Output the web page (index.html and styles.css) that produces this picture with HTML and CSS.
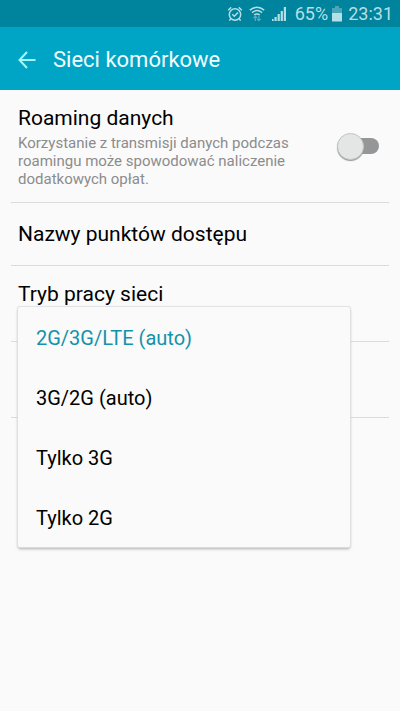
FILE: index.html
```
<!DOCTYPE html>
<html lang="pl">
<head>
	<meta charset="UTF-8">
	<meta name="viewport" content="width=device-width, initial-scale=1">
	<title>Sieci komórkowe</title>
	<link rel="stylesheet" href="styles.css">
</head>
<body>
	<div class="status-bar">
		<svg class="alarm" width="16" height="16" viewBox="0 0 16 16">
			<circle cx="8" cy="8.5" r="5.7"/>
			<path d="M1.2 4.2L4.2 1.4M14.8 4.2L11.8 1.4M3.8 12.8L2.4 14.6M12.2 12.8L13.6 14.6M5.3 8.3L7.3 10.2L11 6.4"/>
		</svg>
		<svg class="wifi" width="16" height="16" viewBox="0 0 16 16">
			<path d="M.8 4.2Q8 -1.6 15.2 4.2M3 6.6Q8 2.6 13 6.6M5.2 9Q8 6.8 10.8 9"/>
			<path class="arrows" d="M6.3 15V10.4M4.6 12L6.3 10.2L8 12M9.9 9.8V14.4M8.2 12.9L9.9 14.7L11.6 12.9"/>
		</svg>
		<svg class="signal" width="16" height="16" viewBox="0 0 16 16">
			<path d="M1 13h1.600v2H1zM3.500 11h2.200v4H3.500zM6.600 8h2.200v7H6.600zM9.700 5h2.200v10H9.700zM12.800 1h2.200v14h-2.200z"/>
		</svg>
		<span class="percent">65%</span>
		<svg class="battery" width="10" height="16" viewBox="0 0 10 16">
			<path class="empty" d="M3 0h4v2h3v6H0V2h3z"/>
			<path d="M0 7h10v8.500H0z"/>
		</svg>
		<span class="clock">23:31</span>
	</div>

	<header class="top-bar">
		<button class="back" type="button" aria-label="Wstecz">
			<svg width="18" height="18" viewBox="0 0 18 18">
				<path d="M17.500 9H1.500M9 1L1.500 9L9 17"/>
			</svg>
		</button>
		<h1>Sieci komórkowe</h1>
	</header>

	<main class="settings">
		<section class="item roaming">
			<div class="text">
				<label for="roaming">Roaming danych</label>
				<p id="roaming-info">Korzystanie z transmisji danych podczas roamingu może spowodować naliczenie dodatkowych opłat.</p>
			</div>
			<input class="switch" id="roaming" type="checkbox" role="switch" aria-describedby="roaming-info">
		</section>
		<section class="item apn">
			<a href="#apn">Nazwy punktów dostępu</a>
		</section>
		<section class="item mode">
			<h2 id="mode-title">Tryb pracy sieci</h2>
			<div class="menu" role="menu" aria-labelledby="mode-title">
				<button class="active" type="button" role="menuitemradio" aria-checked="true">2G/3G/LTE (auto)</button>
				<button type="button" role="menuitemradio" aria-checked="false">3G/2G (auto)</button>
				<button type="button" role="menuitemradio" aria-checked="false">Tylko 3G</button>
				<button type="button" role="menuitemradio" aria-checked="false">Tylko 2G</button>
			</div>
		</section>
		<section class="item covered"></section>
	</main>
</body>
</html>
```

FILE: styles.css
```
*{
	margin: 0;
	padding: 0;
	box-sizing: border-box;
}
body{
	min-height: 100vh;
	background: #fafafa;
	color: #000;
	font-family: Roboto, "Noto Sans", sans-serif;
	font-size: 21px;
	line-height: 24px;
}
button{
	border: 0;
	background: none;
	font: inherit;
	color: inherit;
}

/* status bar */
.status-bar{
	display: flex;
	align-items: center;
	justify-content: flex-end;
	height: 27px;
	padding-right: 7px;
	background: #00839c;
	color: #b5dfe6;
	font-size: 18px;
}
.status-bar svg{
	fill: #b5dfe6;
}
.status-bar .alarm,
.status-bar .wifi{
	margin-right: 6px;
	fill: none;
	stroke: #b5dfe6;
	stroke-width: 1.5;
}
.status-bar .arrows{
	stroke: #59afbf;
	stroke-width: 1.2;
}
.status-bar .signal{
	margin-right: 8px;
}
.status-bar .battery{
	margin: 0 6px 0 4px;
}
.status-bar .empty{
	fill: #4aa5b6;
}

/* title bar */
.top-bar{
	display: flex;
	align-items: center;
	height: 63px;
	padding: 2px 18px 0;
	background: #00a5c6;
	color: #f2fcfd;
}
.top-bar h1{
	font-size: 22px;
	font-weight: 400;
}
.back{
	display: flex;
	margin-right: 17px;
}
.back svg{
	fill: none;
	stroke: #a5f7f7;
	stroke-width: 2;
}

/* list */
.settings{
	padding: 0 11px;
}
.item{
	position: relative;
	padding: 0 7px;
	border-bottom: 1px solid #dcdcdc;
}
.item h2{
	font-size: 21px;
	font-weight: 400;
}
.roaming{
	display: flex;
	align-items: center;
	justify-content: space-between;
	padding: 16px 10px 14px 7px;
}
.roaming .text{
	max-width: 290px;
}
.roaming label{
	display: block;
}
.roaming p{
	padding-top: 4px;
	color: #8c8c8c;
	font-size: 15px;
	line-height: 18px;
}
.switch{
	position: relative;
	flex: none;
	width: 40px;
	height: 16px;
	margin-bottom: 3px;
	border-radius: 8px;
	background: #959697;
	appearance: none;
}
.switch::before{
	content: "";
	position: absolute;
	top: -5px;
	left: -2px;
	width: 25px;
	height: 25px;
	border: 1px solid #c4c5c5;
	border-radius: 50%;
	background: #e4e6e6;
	box-shadow: 0 1px 1px #999;
}
.switch:checked::before{
	left: 17px;
}
.apn{
	padding: 19px 7px;
}
.apn a{
	color: inherit;
	text-decoration: none;
}
.mode{
	height: 76px;
	padding-top: 16px;
}
.covered{
	height: 76px;
}

/* drop-down menu */
.menu{
	position: absolute;
	z-index: 1;
	top: 41px;
	left: 7px;
	right: 39px;
	border-radius: 2px;
	background: #fafafa;
	box-shadow: 0 0 1px 1px #dfe1e1, 0 2px 3px #aaaeae;
}
.menu button{
	display: block;
	width: 100%;
	height: 60px;
	padding: 2px 18px 0;
	font-size: 20px;
	text-align: left;
}
.menu .active{
	color: #1292ab;
}
```
